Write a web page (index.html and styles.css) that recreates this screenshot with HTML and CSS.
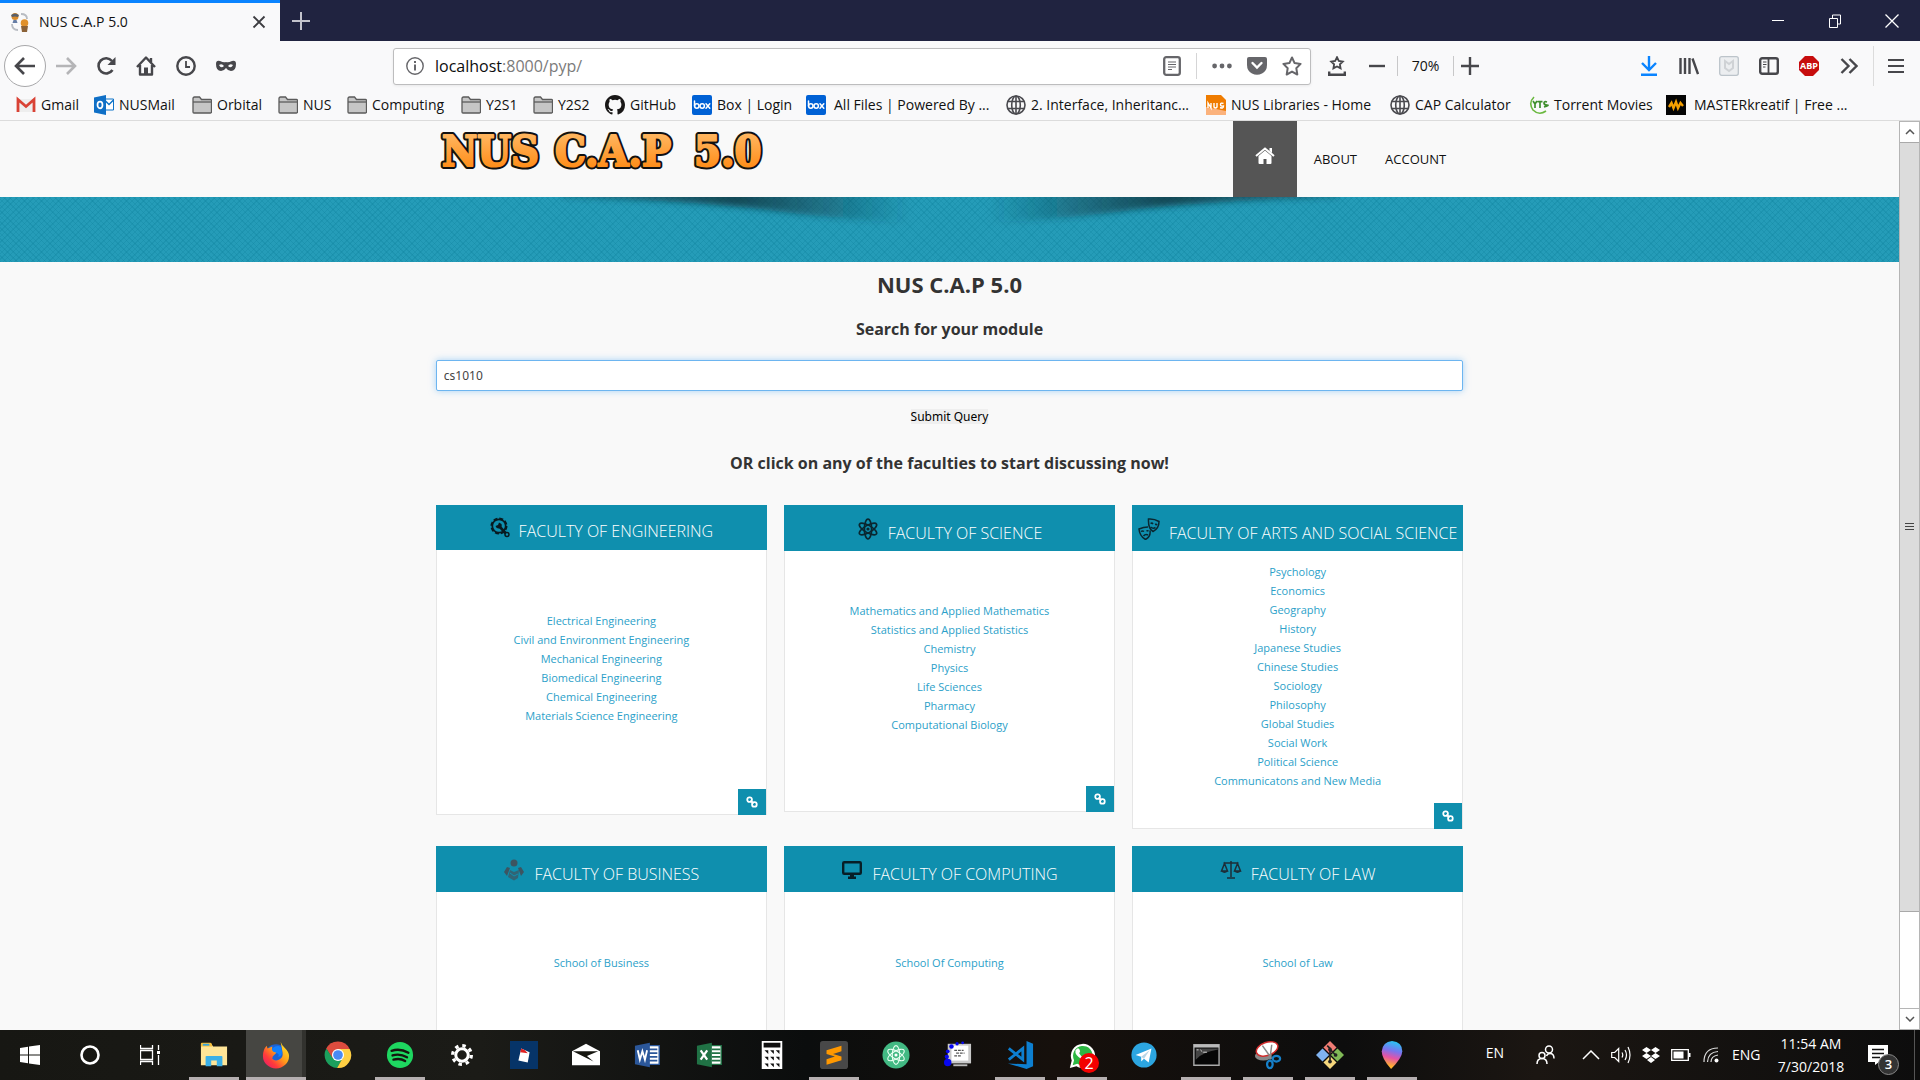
FILE: index.html
```html
<!DOCTYPE html>
<html lang="en">
<head>
<meta charset="utf-8">
<title>NUS C.A.P 5.0</title>
<link rel="stylesheet" href="styles.css">
</head>
<body>
<svg class="defs" aria-hidden="true">
  <defs>
    <symbol id="folder" viewBox="0 0 20 20"><path d="M1 3.500q0-1.500 1.500-1.500h5l2 2.500h9q1 0 1 1v11.500q0 1-1 1h-16.500q-1 0-1-1z" fill="#c6c6c6" stroke="#5b5b5b" stroke-width="1.300"/><path d="M1 7h18" stroke="#5b5b5b" stroke-width="1.300"/></symbol>
    <symbol id="globe" viewBox="0 0 20 20"><g fill="none" stroke="#4a4a4f" stroke-width="1.600"><circle cx="10" cy="10" r="9"/><ellipse cx="10" cy="10" rx="4.300" ry="9"/><path d="M10 1v18M2 6.500h16M2 13.500h16"/></g></symbol>
    <symbol id="chain" viewBox="0 0 12 12"><g fill="none" stroke="#fff" stroke-width="1.800"><rect x="1.300" y="1.300" width="4.600" height="4.600" rx="2"/><rect x="6.100" y="6.100" width="4.600" height="4.600" rx="2"/><path d="M4.500 4.500l3 3"/></g></symbol>
    <symbol id="box" viewBox="0 0 20 20"><rect width="20" height="20" rx="2" fill="#0061d5"/><g fill="none" stroke="#fff" stroke-width="1.500" stroke-linecap="round"><path d="M2.500 6v5"/><circle cx="4.800" cy="11" r="2.200"/><circle cx="10.200" cy="11" r="2.200"/><path d="M14 8.800l3.800 4.400M17.800 8.800L14 13.200"/></g></symbol>
  </defs>
</svg>

<header class="browser">
  <div class="tabs">
    <div class="tab">
      <svg width="20" height="20" viewBox="0 0 20 20"><path d="M11 2q6 0 6 5M2 12q0 6 6 6" fill="none" stroke="#b8bcc2" stroke-width="1.800"/><circle cx="5" cy="4.500" r="3.500" fill="#d98b2b"/><path d="M1 3q4-3 8 0l-1 2q-3-1-6 0z" fill="#59606b"/><path d="M3.500 8h3l1 3H2.500z" fill="#667da5"/><circle cx="14.500" cy="11" r="3.800" fill="#e0912c"/><path d="M11 14h7l-1 6h-5z" fill="#8b6238"/></svg>
      <span class="tab-title">NUS C.A.P 5.0</span>
      <button class="plain" aria-label="Close tab"><svg width="14" height="14" viewBox="0 0 14 14"><path d="M1.500 1.500l11 11M12.500 1.500l-11 11" stroke="#3c3c40" stroke-width="1.800"/></svg></button>
    </div>
    <button class="plain newtab" aria-label="New tab"><svg width="18" height="18" viewBox="0 0 18 18"><path d="M9 0v18M0 9h18" stroke="#c3c3cc" stroke-width="2"/></svg></button>
    <div class="winbtns">
      <button class="plain" aria-label="Minimize"><svg width="12" height="12" viewBox="0 0 12 12"><path d="M0 5.500h12" stroke="#fff"/></svg></button>
      <button class="plain" aria-label="Restore"><svg width="12" height="14" viewBox="0 0 12 14"><path d="M.5 4.500h8v9h-8zM3.500 4.500v-3.500h8v9h-3" fill="none" stroke="#fff"/></svg></button>
      <button class="plain" aria-label="Close window"><svg width="14" height="14" viewBox="0 0 14 14"><path d="M.5.5l13 13M13.500.5l-13 13" stroke="#fff" stroke-width="1.300"/></svg></button>
    </div>
  </div>

  <div class="toolbar">
    <button class="plain back" aria-label="Back"><svg width="22" height="20" viewBox="0 0 22 20"><path d="M21 10H3M10 2L2 10l8 8" fill="none" stroke="#47474b" stroke-width="2.600"/></svg></button>
    <button class="plain tool" aria-label="Forward"><svg width="22" height="20" viewBox="0 0 22 20"><path d="M1 10h18M12 2l8 8-8 8" fill="none" stroke="#b5b5b7" stroke-width="2.600"/></svg></button>
    <button class="plain tool" aria-label="Reload"><svg width="20" height="20" viewBox="0 0 20 20"><path d="M16.500 14a7.600 7.600 0 1 1-.500-9" fill="none" stroke="#47474b" stroke-width="2.600"/><path d="M19.500 1v8h-8z" fill="#47474b"/></svg></button>
    <button class="plain tool" aria-label="Home"><svg width="20" height="20" viewBox="0 0 20 20"><path d="M1 11l9-9.500 9 9.500M4 9v9.500h12V9M15 6V2" fill="none" stroke="#47474b" stroke-width="2.400" stroke-linejoin="round"/><path d="M8 18.500v-7h4v7z" fill="#47474b"/></svg></button>
    <button class="plain tool" aria-label="History"><svg width="20" height="20" viewBox="0 0 20 20"><circle cx="10" cy="10" r="8.700" fill="none" stroke="#47474b" stroke-width="2.400"/><path d="M10 5v6h4" fill="none" stroke="#47474b" stroke-width="1.800"/></svg></button>
    <button class="plain tool" aria-label="Private window"><svg width="20" height="12" viewBox="0 0 20 12"><path fill="#47474b" fill-rule="evenodd" d="M0 4Q0 0 4 1q4 2 6 1 2 1 6-1 4-1 4 3 0 7-5 7-3 0-5-3-2 3-5 3-5 0-5-7zM3 5q3-2 5 1-3 3-5-1zM17 5q-3-2-5 1 3 3 5-1z"/></svg></button>
    <div class="urlbar">
      <svg width="18" height="18" viewBox="0 0 18 18"><circle cx="9" cy="9" r="8.200" fill="none" stroke="#66666a" stroke-width="1.400"/><path d="M9 7.500v6M9 4v2" stroke="#66666a" stroke-width="2"/></svg>
      <div class="url"><b>localhost</b>:8000/pyp/</div>
      <button class="plain" aria-label="Reader view"><svg width="18" height="20" viewBox="0 0 18 20"><rect x="1.200" y="1.200" width="15.600" height="17.600" rx="2" fill="none" stroke="#66666a" stroke-width="2.300"/><path d="M5 6h8M5 8.500h8M5 11h8M5 13.500h4" stroke="#66666a" stroke-width="1.200"/></svg></button>
      <i class="usep"></i>
      <button class="plain" aria-label="Page actions"><svg width="20" height="6" viewBox="0 0 20 6"><g fill="#66666a"><circle cx="2.600" cy="3" r="2.400"/><circle cx="10" cy="3" r="2.400"/><circle cx="17.400" cy="3" r="2.400"/></g></svg></button>
      <button class="plain" aria-label="Pocket"><svg width="20" height="18" viewBox="0 0 20 18"><path d="M2 0h16q2 0 2 2v6q0 6-5 8.500-5 2.500-10 0Q0 14 0 8V2q0-2 2-2z" fill="#66666a"/><path d="M5.500 6L10 10.500 14.500 6" fill="none" stroke="#fff" stroke-width="2.400" stroke-linecap="round"/></svg></button>
      <button class="plain" aria-label="Bookmark"><svg width="20" height="20" viewBox="0 0 20 20"><path d="M10 1.500l2.600 5.600 6 .8-4.300 4.300 1 6.300L10 15.600l-5.300 2.900 1-6.300L1.400 7.900l6-.8z" fill="none" stroke="#66666a" stroke-width="2" stroke-linejoin="round"/></svg></button>
    </div>
    <button class="plain tool" aria-label="Bookmarks menu"><svg width="18" height="20" viewBox="0 0 18 20"><path d="M9 1.200l1.800 3.700 4 .6-2.900 2.800.7 4L9 10.400l-3.600 1.900.7-4-2.900-2.800 4-.6z" fill="none" stroke="#47474b" stroke-width="1.800"/><path d="M1.200 15.500v3.200h15.600v-3.200" fill="none" stroke="#47474b" stroke-width="2.400"/></svg></button>
    <button class="plain tool" aria-label="Zoom out"><svg width="16" height="4" viewBox="0 0 16 4"><path d="M0 2h16" stroke="#47474b" stroke-width="2.400"/></svg></button>
    <button class="plain zoomlevel">70%</button>
    <button class="plain zoomin" aria-label="Zoom in"><svg width="18" height="18" viewBox="0 0 18 18"><path d="M9 0v18M0 9h18" stroke="#47474b" stroke-width="2.400"/></svg></button>
    <div class="tools">
      <button class="plain tool" aria-label="Downloads"><svg width="18" height="20" viewBox="0 0 18 20"><path d="M9 0v13M2 7l7 7 7-7M1 18.800h16" fill="none" stroke="#0a84ff" stroke-width="2.400"/></svg></button>
      <button class="plain tool" aria-label="Library"><svg width="20" height="18" viewBox="0 0 20 18"><path d="M1.500 1v16M6 1v16M10.500 1v16M13.500 1.500L19 17" stroke="#47474b" stroke-width="2.400"/></svg></button>
      <button class="plain tool" aria-label="Site advisor"><svg width="20" height="20" viewBox="0 0 20 20"><rect x=".7" y=".7" width="18.600" height="18.600" rx="2" fill="#eceef0" stroke="#bcc4ca" stroke-width="1.300"/><path d="M6 5l4 3 4-3v7l-4 3-4-3z" fill="none" stroke="#cfd2d5" stroke-width="2"/></svg></button>
      <button class="plain tool" aria-label="Sidebars"><svg width="20" height="18" viewBox="0 0 20 18"><rect x="1.200" y="1.200" width="17.600" height="15.600" rx="2" fill="none" stroke="#47474b" stroke-width="2.400"/><path d="M9.500 1v16" stroke="#47474b" stroke-width="1.800"/><path d="M4 5h3.500M4 7.500h3.500M4 10h2.500" stroke="#47474b"/></svg></button>
      <button class="plain tool abp" aria-label="Adblock Plus"><span>ABP</span></button>
      <button class="plain tool" aria-label="More tools"><svg width="18" height="16" viewBox="0 0 18 16"><path d="M1.500 1l7 7-7 7M9.500 1l7 7-7 7" fill="none" stroke="#47474b" stroke-width="2.400"/></svg></button>
    </div>
    <button class="plain menu" aria-label="Menu"><svg width="16" height="16" viewBox="0 0 16 16"><path d="M0 2h16M0 8h16M0 14h16" stroke="#47474b" stroke-width="2.200"/></svg></button>
  </div>

  <nav class="bookmarks" aria-label="Bookmarks">
    <a href="#"><svg viewBox="0 0 20 20"><path d="M2 4h16v13H2z" fill="#eee"/><path d="M2 17V4.500l8 7 8-7V17" fill="none" stroke="#d94235" stroke-width="2.800"/></svg>Gmail</a>
    <a href="#"><svg viewBox="0 0 20 20"><path d="M10 4h9.500v11H10z" fill="#fff" stroke="#0f74c8"/><path d="M11 5.500l4 4 5-5" fill="none" stroke="#0f74c8" stroke-width="1.500"/><path d="M0 2.500L12 0v20L0 17.500z" fill="#0f6fc6"/><ellipse cx="6" cy="10" rx="2.500" ry="3.300" fill="none" stroke="#fff" stroke-width="1.700"/></svg>NUSMail</a>
    <a href="#"><svg><use href="#folder"/></svg>Orbital</a>
    <a href="#"><svg><use href="#folder"/></svg>NUS</a>
    <a href="#"><svg><use href="#folder"/></svg>Computing</a>
    <a href="#"><svg><use href="#folder"/></svg>Y2S1</a>
    <a href="#"><svg><use href="#folder"/></svg>Y2S2</a>
    <a href="#"><svg viewBox="0 0 16 16"><path fill="#191717" d="M8 0C3.580 0 0 3.580 0 8c0 3.540 2.290 6.530 5.470 7.590.4.070.55-.17.55-.38 0-.19-.01-.82-.01-1.490-2.010.37-2.530-.49-2.690-.94-.09-.23-.48-.94-.82-1.130-.28-.15-.68-.52-.01-.53.63-.01 1.080.58 1.230.82.72 1.210 1.870.87 2.330.66.07-.52.28-.87.51-1.070-1.780-.2-3.640-.89-3.640-3.950 0-.87.31-1.590.82-2.150-.08-.2-.36-1.020.08-2.120 0 0 .67-.21 2.200.82a7.600 7.600 0 0 1 4 0c1.530-1.040 2.200-.82 2.200-.82.44 1.100.16 1.920.08 2.120.51.56.82 1.270.82 2.150 0 3.070-1.870 3.750-3.650 3.950.29.25.54.73.54 1.480 0 1.070-.01 1.930-.01 2.200 0 .21.15.46.55.38A8 8 0 0 0 16 8c0-4.420-3.580-8-8-8z"/></svg>GitHub</a>
    <a href="#"><svg><use href="#box"/></svg>Box | Login</a>
    <a href="#" class="wide"><svg><use href="#box"/></svg>All Files | Powered By ...</a>
    <a href="#"><svg><use href="#globe"/></svg>2. Interface, Inheritanc...</a>
    <a href="#"><svg viewBox="0 0 20 20"><path d="M0 0h15l5 5v15H0z" fill="#ef7c00"/><path d="M0 12l20 4v4H0z" fill="#fbb27c"/><path d="M2 13V8l3 5V8M8 8v4q1.500 2 3 0V8M17.500 8.500q-3-1-3 1t3 1.500q0 3-3.500 1.500" fill="none" stroke="#fff" stroke-width="1.400"/></svg>NUS Libraries - Home</a>
    <a href="#"><svg><use href="#globe"/></svg>CAP Calculator</a>
    <a href="#"><svg viewBox="0 0 20 20"><path d="M5 2Q-1 8 4 15q6 6 13 1" fill="none" stroke="#6ab83f" stroke-width="1.600"/><path d="M4 6l2 3 2-3M6 9v4M8.500 6.700h5M11 6.700V13M18 7q-3-1-3 1t3 2-3 2" fill="none" stroke="#3e8e2d" stroke-width="1.700"/></svg>Torrent Movies</a>
    <a href="#" class="wide"><svg viewBox="0 0 20 20"><path fill="#050505" d="M0 0h20v20H0z"/><path d="M3 12l2.500-4 2 5 2.500-6 2 6 2.500-5 2.500 3" fill="none" stroke="#f6a000" stroke-width="2.400"/></svg>MASTERkreatif | Free ...</a>
  </nav>
</header>

<div class="viewport">
  <div class="page">
    <div class="site-head">
      <div class="wrap head-row">
        <a href="#" class="logo" aria-label="NUS C.A.P 5.0">
          <svg width="340" height="52" viewBox="0 0 340 52">
            <defs><linearGradient id="gold" x1="0" y1="0" x2="0" y2="1"><stop offset=".2" stop-color="#ffb45c"/><stop offset=".85" stop-color="#ff8c17"/></linearGradient></defs>
            <g class="logo-line"><text x="6" y="41">NUS</text><text x="119" y="41">C.A.P</text><text x="258" y="41">5.0</text></g>
            <g class="logo-fill" fill="url(#gold)" stroke="url(#gold)"><text x="6" y="41">NUS</text><text x="119" y="41">C.A.P</text><text x="258" y="41">5.0</text></g>
          </svg>
        </a>
        <nav class="site-nav">
          <a href="#" class="home" aria-label="Home"><svg width="20" height="18" viewBox="0 0 20 18"><path d="M10 3.500l6.500 5.500v7q0 1-1 1H11.500v-5h-3v5h-4q-1 0-1-1V9z" fill="#fff"/><path d="M1 9l9-7.500L19 9" fill="none" stroke="#fff" stroke-width="2"/><path d="M14.500 1h2.500v5l-2.500-2z" fill="#fff"/></svg></a>
          <a href="#">ABOUT</a>
          <a href="#">ACCOUNT</a>
        </nav>
      </div>
    </div>
    <div class="banner">
      <svg width="780" height="34" viewBox="0 0 780 34">
        <defs>
          <linearGradient id="fade" gradientUnits="userSpaceOnUse" x1="0" y1="0" x2="350" y2="0"><stop offset="0" stop-color="#12343e" stop-opacity=".4"/><stop offset=".5" stop-color="#12343e" stop-opacity=".8"/><stop offset="1" stop-color="#12343e" stop-opacity="0"/></linearGradient>
          <filter id="soft" x="-10%" y="-60%" width="120%" height="220%"><feGaussianBlur stdDeviation="4 3"/></filter>
        </defs>
        <path id="lobe" d="M0-8V0Q130 4 200 12 270 22 350 26V-8z" fill="url(#fade)" filter="url(#soft)"/>
        <use href="#lobe" transform="matrix(-1 0 0 1 780 0)"/>
      </svg>
    </div>

    <main class="wrap">
      <h1>NUS C.A.P 5.0</h1>
      <form>
        <h2><label for="q">Search for your module</label></h2>
        <input id="q" type="text" value="cs1010">
        <button type="button" class="submit">Submit Query</button>
      </form>
      <h2 class="or">OR click on any of the faculties to start discussing now!</h2>

      <div class="cards">
        <section class="card mid">
          <h3 class="short"><svg width="20" height="21" viewBox="0 0 20 21"><circle cx="9" cy="9" r="7.500" fill="none" stroke="#081a20" stroke-width="2" stroke-dasharray="4 1.900"/><circle cx="9" cy="9" r="6.700" fill="none" stroke="#081a20" stroke-width="1.700"/><path d="M9 9l7 7.500" stroke="#081a20" stroke-width="2.600"/><path d="M9 5.500l-1 2.500-2.500 1q1 3 4 2.500 3-1.500 2-4.500z" fill="#081a20"/><circle cx="17" cy="17.500" r="2" fill="#0f8fae" stroke="#081a20" stroke-width="1.500"/></svg>FACULTY OF ENGINEERING</h3>
          <ul><li><a href="#">Electrical Engineering</a></li><li><a href="#">Civil and Environment Engineering</a></li><li><a href="#">Mechanical Engineering</a></li><li><a href="#">Biomedical Engineering</a></li><li><a href="#">Chemical Engineering</a></li><li><a href="#">Materials Science Engineering</a></li></ul>
          <a href="#" class="more" aria-label="Open"><svg width="12" height="12"><use href="#chain"/></svg></a>
        </section>
        <section class="card low">
          <h3><svg width="22" height="22" viewBox="0 0 22 22"><g fill="none" stroke="#0a2730" stroke-width="1.700"><ellipse cx="11" cy="11" rx="3.600" ry="9.800"/><ellipse cx="11" cy="11" rx="3.600" ry="9.800" transform="rotate(60 11 11)"/><ellipse cx="11" cy="11" rx="3.600" ry="9.800" transform="rotate(120 11 11)"/></g><circle cx="11" cy="11" r="1.600" fill="#0a2730"/></svg>FACULTY OF SCIENCE</h3>
          <ul><li><a href="#">Mathematics and Applied Mathematics</a></li><li><a href="#">Statistics and Applied Statistics</a></li><li><a href="#">Chemistry</a></li><li><a href="#">Physics</a></li><li><a href="#">Life Sciences</a></li><li><a href="#">Pharmacy</a></li><li><a href="#">Computational Biology</a></li></ul>
          <a href="#" class="more" aria-label="Open"><svg width="12" height="12"><use href="#chain"/></svg></a>
        </section>
        <section class="card full">
          <h3><svg width="22" height="22" viewBox="0 0 22 22"><g fill="none" stroke="#0a2730" stroke-width="1.500"><path d="M10.500 1q5.500-.5 10.500 2.500 0 7-6 10-5-3-4.500-12.500zM10 9q-4.500 0-9 2 .5 7 6.500 10.500 5.500-3 4.500-9"/><path d="M12.500 5.500q1.500-1 2.500.5M17 6.500q1.500-.5 2 .8M12.500 9q2.500 2 5 .5M3 13.500q1.500-1 3 0M8.500 13q1-.5 2 0M5.500 18q2-2.500 4.500-1"/></g></svg>FACULTY OF ARTS AND SOCIAL SCIENCE</h3>
          <ul><li><a href="#">Psychology</a></li><li><a href="#">Economics</a></li><li><a href="#">Geography</a></li><li><a href="#">History</a></li><li><a href="#">Japanese Studies</a></li><li><a href="#">Chinese Studies</a></li><li><a href="#">Sociology</a></li><li><a href="#">Philosophy</a></li><li><a href="#">Global Studies</a></li><li><a href="#">Social Work</a></li><li><a href="#">Political Science</a></li><li><a href="#">Communicatons and New Media</a></li></ul>
          <a href="#" class="more" aria-label="Open"><svg width="12" height="12"><use href="#chain"/></svg></a>
        </section>
        <section class="card mid">
          <h3><svg width="22" height="22" viewBox="0 0 22 22"><g fill="#3d5561"><circle cx="11" cy="4" r="3.500"/><path d="M4 8l3 1-3 8-3-4zM18 8l3 5-3 4-3-8z"/><path d="M7 11l4 2 5-2-1 8-4 2.500L5 18z" opacity=".75"/></g><path d="M7 14l4 3 4-2" stroke="#0f8fae" fill="none"/></svg>FACULTY OF BUSINESS</h3>
          <ul><li><a href="#">School of Business</a></li></ul>
          <a href="#" class="more" aria-label="Open"><svg width="12" height="12"><use href="#chain"/></svg></a>
        </section>
        <section class="card mid">
          <h3><svg width="22" height="22" viewBox="0 0 22 22"><rect x="2.200" y="3.200" width="17.600" height="11.600" rx="1" fill="none" stroke="#071e26" stroke-width="2.400"/><path d="M9 15h4v2.500h2V20H7v-2.500h2z" fill="#071e26"/></svg>FACULTY OF COMPUTING</h3>
          <ul><li><a href="#">School Of Computing</a></li></ul>
          <a href="#" class="more" aria-label="Open"><svg width="12" height="12"><use href="#chain"/></svg></a>
        </section>
        <section class="card mid">
          <h3><svg width="22" height="22" viewBox="0 0 22 22"><g fill="none" stroke="#1d2e38" stroke-width="1.500"><path d="M11 2v16M3.500 4h15M7 19h8M4.500 4.500L1.500 12h6zM17.500 4.500l-3 7.500h6z"/></g><path d="M1 12h7q-3.500 4-7 0zM14 12h7q-3.500 4-7 0z" fill="#1d2e38"/></svg>FACULTY OF LAW</h3>
          <ul><li><a href="#">School of Law</a></li></ul>
          <a href="#" class="more" aria-label="Open"><svg width="12" height="12"><use href="#chain"/></svg></a>
        </section>
      </div>
    </main>
  </div>
  <div class="scrollbar" aria-hidden="true">
    <div class="arrow"><svg width="10" height="6" viewBox="0 0 10 6"><path d="M1 5l4-4 4 4" fill="none" stroke="#555" stroke-width="1.500"/></svg></div>
    <div class="thumb"><svg width="9" height="8" viewBox="0 0 9 8"><path d="M0 .5h9M0 3.500h9M0 6.500h9" stroke="#444"/></svg></div>
    <div class="track"></div>
    <div class="arrow"><svg width="10" height="6" viewBox="0 0 10 6"><path d="M1 1l4 4 4-4" fill="none" stroke="#555" stroke-width="1.500"/></svg></div>
  </div>
</div>

<footer class="taskbar">
  <div class="system">
    <button class="plain" aria-label="Start"><svg width="20" height="20" viewBox="0 0 20 20"><path d="M0 3l8-1.200v7.700H0zM9 1.600L20 0v9.500H9zM0 10.500h8v7.700L0 17zM9 10.500h11V20L9 18.400z" fill="#fff"/></svg></button>
    <button class="plain" aria-label="Cortana"><svg width="20" height="20" viewBox="0 0 20 20"><circle cx="10" cy="10" r="8.500" fill="none" stroke="#fff" stroke-width="2.600"/></svg></button>
    <button class="plain" aria-label="Task view"><svg width="20" height="20" viewBox="0 0 20 20"><path d="M.5 0v3.500h12V0M.5 5.500h12v9H.5zM.5 20v-3.500h12V20M18.500 0v5M18.500 10v10" fill="none" stroke="#fff" stroke-width="1.300"/><path d="M17 6h3v3h-3z" fill="#fff"/></svg></button>
  </div>
  <div class="apps">
    <button class="plain run" aria-label="File Explorer"><svg viewBox="0 0 30 30"><path d="M1 3h11l2 3h15v20H1z" fill="#ffe597"/><path d="M1 3q0-1 1-1h9q2 0 2 4H1z" fill="#f5bf3c"/><path d="M3 3h7v2H3z" fill="#35a4dc"/><path d="M6 27V17q0-1 1-1h16q1 0 1 1v10h-6v-6h-6v6z" fill="#3bb0e8"/></svg></button>
    <button class="plain run active" aria-label="Firefox"><svg viewBox="0 0 30 30"><defs><linearGradient id="ff" x1="1" y1="0" x2="0" y2="1"><stop offset=".1" stop-color="#ffe226"/><stop offset=".45" stop-color="#ff9a1a"/><stop offset=".7" stop-color="#ff3b3b"/><stop offset="1" stop-color="#e01278"/></linearGradient></defs><circle cx="15" cy="15" r="11.500" fill="#1b62d6"/><path d="M20 1q1 3 4 6 5 5 5 9A14 13.500 0 0 1 1 16q0-7 4-11l1 3 5-2q-1 3 1 5l4 1-3 3q-2 1-2 4 3 3 7 1 5-2 4-8-1-6-2-11z" fill="url(#ff)"/><path d="M14 6q6-2 7 3 2 7-4 8 3-3-3-5-4-1-3-4z" fill="#1280ff"/></svg></button>
    <button class="plain" aria-label="Chrome"><svg viewBox="0 0 30 30"><path d="M15 15L2.500 8A14 14 0 0 1 27.500 8.500z" fill="#dc4c3e"/><path d="M15 15V1a14 14 0 0 0-12.500 7L9 19z" fill="#dc4c3e"/><path d="M2.500 8A14 14 0 0 0 14 29l6-10-5-4-6 3z" fill="#1b9f5d"/><path d="M14 29A14 14 0 0 0 27.500 8.500H15l5.500 9z" fill="#ffcf43"/><circle cx="15" cy="15" r="6.500" fill="#fff"/><circle cx="15" cy="15" r="5.200" fill="#4a8af4"/></svg></button>
    <button class="plain run" aria-label="Spotify"><svg viewBox="0 0 30 30"><circle cx="15" cy="15" r="14" fill="#1ed760"/><path d="M6 10.500q9-3 18 2M7 15.500q8-2.500 15.500 2M8 20q7-2 12.500 1.500" fill="none" stroke="#15150f" stroke-width="2.500" stroke-linecap="round"/></svg></button>
    <button class="plain" aria-label="Settings"><svg viewBox="0 0 30 30"><circle cx="15" cy="15" r="6.700" fill="none" stroke="#fff" stroke-width="3.200"/><circle cx="15" cy="15" r="10" fill="none" stroke="#fff" stroke-width="3.500" stroke-dasharray="3.700 4.154"/></svg></button>
    <button class="plain" aria-label="Solitaire"><svg viewBox="0 0 30 30"><path d="M0 0h30v30H0z" fill="#063468"/><path d="M12 8l9 4-2 11-10-2z" fill="#fff"/><path d="M12 8l-1 4 8 1-3-3z" fill="#e02020"/></svg></button>
    <button class="plain" aria-label="Mail"><svg viewBox="0 0 30 30"><path d="M0 11L15 3l15 8v15H0z" fill="#fff"/><path d="M1 11h27L16 16l7 6z" fill="#15150f"/></svg></button>
    <button class="plain" aria-label="Word"><svg viewBox="0 0 30 30"><path d="M15 5h12v20H15z" fill="#fff" stroke="#2b579a" stroke-width="1.500"/><path d="M16 9h9M16 13h9M16 17h9M16 21h9" stroke="#2b579a" stroke-width="1.800"/><path d="M1 5l16-3v26L1 25z" fill="#2b579a"/><path d="M4 10l2.300 10L9 11l2.700 9L14 10" fill="none" stroke="#fff" stroke-width="2"/></svg></button>
    <button class="plain" aria-label="Excel"><svg viewBox="0 0 30 30"><path d="M15 5h12v20H15z" fill="#fff" stroke="#207245" stroke-width="1.500"/><path d="M17 9h9M17 13h9M17 17h9M17 21h9" stroke="#207245" stroke-width="2"/><path d="M1 5l16-3v26L1 25z" fill="#207245"/><path d="M5 10l7 10M12 10L5 20" stroke="#fff" stroke-width="2.400"/></svg></button>
    <button class="plain" aria-label="Calculator"><svg viewBox="0 0 30 30"><path d="M4 0h22v30H4z" fill="#fff"/><path d="M6 2h18v5H6zM7 10h4v4zM13 10h4v4zM19 10h4v4zM7 17h4v4zM13 17h4v4zM19 17h4v4zM7 24h4v4zM13 24h4v4zM19 24h4v4z" fill="#111"/></svg></button>
    <button class="plain run" aria-label="Sublime Text"><svg viewBox="0 0 30 30"><rect width="30" height="30" rx="3" fill="#484848"/><path d="M7 10l16-5v6l-9 3 9 2.500v4L7 25.500v-6l9-3-9-2.500z" fill="#ff9800"/></svg></button>
    <button class="plain" aria-label="Atom"><svg viewBox="0 0 30 30"><circle cx="15" cy="15" r="14.500" fill="#42b983"/><g fill="none" stroke="#e9fff2" stroke-width="1.200"><ellipse cx="15" cy="15" rx="4" ry="10"/><ellipse cx="15" cy="15" rx="4" ry="10" transform="rotate(60 15 15)"/><ellipse cx="15" cy="15" rx="4" ry="10" transform="rotate(120 15 15)"/></g><circle cx="15" cy="15" r="1.700" fill="#fff"/></svg></button>
    <button class="plain" aria-label="Editor"><svg viewBox="0 0 30 30"><path d="M4 3h25v21H4z" fill="#c9c9c9"/><path d="M8 5h18v16H8z" fill="#fff"/><path d="M11 10h10M13 13h9M11 16h8" stroke="#555" stroke-width="1.200" stroke-dasharray="3 1"/><path d="M10 25h15v2H10z" fill="#bbb"/><g fill="#0707f0"><circle cx="4" cy="23" r="4"/><circle cx="3" cy="17" r="2.300"/><circle cx="4" cy="11" r="2"/><circle cx="8" cy="6" r="2.400"/><circle cx="14" cy="3" r="1.800"/><circle cx="20" cy="2" r="1.500"/></g></svg></button>
    <button class="plain run" aria-label="Visual Studio Code"><svg viewBox="0 0 30 30"><path d="M22 0l7 3v24l-7 3-20-6 20 1z" fill="#0d7fd0"/><path d="M3 8l15 12V8L3 20" fill="none" stroke="#0d7fd0" stroke-width="3"/></svg></button>
    <button class="plain run" aria-label="WhatsApp, 2 unread"><svg viewBox="0 0 30 30"><path d="M2 29l2-8A13 13 0 1 1 9 27z" fill="#fff"/><path d="M5 26l1.500-5.500A10.500 10.500 0 1 1 10 24.500z" fill="#2cb742"/><path d="M10 8q2-1 3 3l-1 2q1 3 5 4l1-2q4 1 3 3-2 4-7 1-7-4-6-9z" fill="#fff"/></svg><span class="count">2</span></button>
    <button class="plain" aria-label="Telegram"><svg viewBox="0 0 30 30"><circle cx="15" cy="15" r="13.500" fill="#2ca5e0"/><path d="M6 15l17-7-3 15-5-4-3 3v-5z" fill="#fff"/><path d="M12 17l9-7-6 9z" fill="#b8d5e6"/></svg></button>
    <button class="plain run" aria-label="Command Prompt"><svg viewBox="0 0 30 30"><path d="M2 4h27v22H2z" fill="#070707" stroke="#aaa" stroke-width="1.500"/><path d="M2 4h27v3H2z" fill="#bbb"/><path d="M4 20q6-8 24-11V8H4z" fill="#454545"/><path d="M5 9.500h2M9 9.500l2 2M12 12h4" stroke="#ddd"/></svg></button>
    <button class="plain run" aria-label="Snipping Tool"><svg viewBox="0 0 30 30"><ellipse cx="10" cy="16" rx="9" ry="5" fill="#888"/><ellipse cx="14" cy="8.500" rx="12" ry="7" fill="#fff" stroke="#d12c2c" stroke-width="1.600" transform="rotate(-20 14 8.500)"/><path d="M9 5l10 14M19 4l-2 16" stroke="#888" stroke-width="1.600"/><g fill="none" stroke="#1680ca" stroke-width="2.400"><ellipse cx="24" cy="19" rx="4" ry="3"/><ellipse cx="17" cy="25" rx="3" ry="4"/></g></svg></button>
    <button class="plain run" aria-label="Git Bash"><svg viewBox="0 0 30 30"><path d="M15 0l7 7-7 7-7-7z" fill="#f07c74"/><path d="M23 8l7 7-7 7-7-7z" fill="#80b957"/><path d="M15 16l7 7-7 7-7-7z" fill="#f6d77c"/><path d="M7 8l7 7-7 7-7-7z" fill="#80b3f0"/><path d="M12 5l3 3v15M15 9l6 6" fill="none" stroke="#222" stroke-width="1.800"/><circle cx="15" cy="9" r="2" fill="#222"/><circle cx="15" cy="22" r="2" fill="#222"/><circle cx="21" cy="15" r="2" fill="#222"/></svg></button>
    <button class="plain run" aria-label="Paint 3D"><svg viewBox="0 0 30 30"><defs><linearGradient id="p3" x1=".6" y1="0" x2=".4" y2="1"><stop offset="0" stop-color="#26c7f5"/><stop offset=".35" stop-color="#7a74ee"/><stop offset=".6" stop-color="#e553a5"/><stop offset=".9" stop-color="#ffb12e"/></linearGradient></defs><path d="M15 0q11 1 11 11 0 7-12 19-10-11-10-19Q5 1 15 0z" fill="url(#p3)"/></svg></button>
  </div>
  <div class="tray">
    <span class="lang">EN</span>
    <button class="plain people" aria-label="People"><svg width="20" height="20" viewBox="0 0 20 20"><g fill="none" stroke="#fff" stroke-width="1.500"><circle cx="13" cy="4.500" r="3.500"/><circle cx="6" cy="10.500" r="3"/><path d="M1 19q0-5.500 5-5.500T11 19M10.500 11q1-2.500 3.500-2.500 4 0 4 5"/></g></svg></button>
    <button class="plain" aria-label="Show hidden icons"><svg width="18" height="10" viewBox="0 0 18 10"><path d="M1 9l8-8 8 8" fill="none" stroke="#fff" stroke-width="1.500"/></svg></button>
    <button class="plain" aria-label="Volume"><svg width="20" height="18" viewBox="0 0 20 18"><path d="M.7 6.500h3l4-4v13l-4-4h-3zM11 6.500q1.500 2.500 0 5M14 4q3 5 0 10M17 1q4 8 0 16" fill="none" stroke="#fff" stroke-width="1.200"/></svg></button>
    <button class="plain" aria-label="Dropbox"><svg width="18" height="16" viewBox="0 0 18 16"><path d="M4.500 0L9 3 4.500 6 0 3zM13.500 0L18 3l-4.500 3L9 3zM4.500 6L9 9l-4.500 3L0 9zM13.500 6L18 9l-4.500 3L9 9zM9 10l4 3-4 3-4-3z" fill="#fff"/></svg></button>
    <button class="plain" aria-label="Battery"><svg width="20" height="12" viewBox="0 0 20 12"><path d="M.7.7h16.600v10.600H.7z" fill="none" stroke="#fff" stroke-width="1.300"/><path d="M2.500 2.500h10v7h-10zM18 4h1.500v4H18z" fill="#fff"/></svg></button>
    <button class="plain" aria-label="Network"><svg width="16" height="16" viewBox="0 0 16 16"><g fill="none" stroke="#ddd" stroke-width="1.200"><path d="M1 15Q1 1 15 1M4.500 15Q5 5 15 4.500M8 15q0-6 7-7"/></g><circle cx="13.500" cy="13.500" r="2" fill="#fff"/></svg></button>
    <span class="ime">ENG</span>
    <div class="clock">11:54 AM<br>7/30/2018</div>
    <button class="plain notes" aria-label="3 notifications"><svg width="20" height="20" viewBox="0 0 20 20"><path d="M0 0h20v17h-9l-4 3v-3H0z" fill="#fff"/><path d="M4 4.500h12M4 8.500h12M4 12.500h8" stroke="#111" stroke-width="1.300"/></svg><span class="bubble">3</span></button>
  </div>
</footer>
</body>
</html>
```
FILE: styles.css
```css
* { box-sizing: border-box; }

body {
  margin: 0;
  height: 100vh;
  display: flex;
  flex-direction: column;
  overflow: hidden;
  background: #f9f9fa;
  color: #111;
  font: 14px/20px "Open Sans", "Noto Sans", sans-serif;
}

a { color: inherit; text-decoration: none; }
svg { display: block; flex: none; }
.defs { position: absolute; width: 0; height: 0; }

.plain {
  display: flex;
  align-items: center;
  justify-content: center;
  padding: 0;
  border: 0;
  background: none;
  color: inherit;
  font: inherit;
}

/* Browser chrome */
.browser { flex: none; border-bottom: 1px solid #dcdcdc; }
.tabs { display: flex; height: 41px; background: #202340; }
.tab {
  display: flex;
  align-items: center;
  width: 280px;
  padding: 0 14px 0 10px;
  gap: 9px;
  border-top: 3px solid #0a84ff;
  background: #f9f9fa;
}
.tab-title { flex: 1; }
.newtab { width: 42px; }
.winbtns { display: flex; margin-left: auto; }
.winbtns button { width: 57px; }

.toolbar { display: flex; align-items: center; height: 50px; padding: 0 3px 0 4px; }
.back {
  width: 42px;
  height: 42px;
  border: 1px solid #a8a8aa;
  border-radius: 50%;
  background: #fff;
}
.tool { width: 40px; height: 40px; }
.urlbar {
  display: flex;
  align-items: center;
  flex: 1;
  height: 37px;
  margin: 0 6px 0 147px;
  padding: 0 8px 0 12px;
  gap: 15px;
  border: 1px solid #bdbdbe;
  border-radius: 3px;
  background: #fff;
  box-shadow: 0 1px 3px #0001;
}
.url { flex: 1; margin-left: -4px; color: #7b7b7b; font-size: 16px; }
.url b { color: #0c0c0d; font-weight: 400; }
.usep { width: 1px; height: 26px; background: #d5d5d6; }
.zoomlevel {
  width: 57px;
  height: 20px;
  border: solid #c8c8c9;
  border-width: 0 1px;
}
.zoomin { width: 32px; height: 40px; }
.tools { display: flex; margin-left: 143px; }
.abp span {
  width: 20px;
  height: 20px;
  background: #c70d0d;
  clip-path: polygon(30% 0, 70% 0, 100% 30%, 100% 70%, 70% 100%, 30% 100%, 0 70%, 0 30%);
  color: #fff;
  font-size: 9px;
  font-weight: 700;
}
.menu { width: 44px; height: 40px; margin-left: 4px; border-left: 1px solid #dcdcdc; }

.bookmarks {
  display: grid;
  grid-template-columns: 78px 98px 86px 69px 114px 72px 72px 87px 114px 200px 200px 184px 139px 137px 1fr;
  height: 29px;
  padding-left: 16px;
}
.bookmarks a { display: flex; align-items: center; gap: 5px; height: 28px; white-space: nowrap; }
.bookmarks .wide { gap: 8px; }
.bookmarks svg { width: 20px; height: 20px; }

/* Site */
.viewport { display: flex; flex: 1; min-height: 0; }
.page { flex: 1; overflow: hidden; background: #f9f9f9; }
.wrap { width: 54.1%; margin: 0 auto; }
.head-row { display: flex; justify-content: space-between; height: 76px; }
.logo { padding-top: 4px; }
.logo text { font: bold 43px "DejaVu Serif Condensed", "DejaVu Serif", serif; }
.logo-line { fill: #111; stroke: #111; stroke-width: 6px; stroke-linejoin: round; }
.logo-fill { stroke-width: 2px; stroke-linejoin: round; }
.site-nav { display: flex; padding-right: 3px; color: #111; font-size: 13px; }
.site-nav a { display: flex; align-items: center; padding: 0 14px; }
.site-nav .home { width: 64px; justify-content: center; padding: 0 0 6px; background: #555; }
.site-nav a:nth-child(2) { padding-left: 17px; }

.banner {
  display: flex;
  justify-content: center;
  height: 65px;
  background:
    repeating-linear-gradient(45deg, #0b7f9a44 0 1px, transparent 1px 4px),
    repeating-linear-gradient(-45deg, #0b7f9a44 0 1px, transparent 1px 4px),
    #259cb8;
}

main { text-align: center; }
h1, h2, h3 { margin: 0; color: #333; }
h1 { padding-top: 7px; font-size: 22px; line-height: 30px; }
h2 { font-size: 16px; line-height: 22px; }
form h2 { padding: 19px 0 20px; }
form input {
  display: block;
  width: 100%;
  height: 31px;
  padding: 0 7px;
  border: 1px solid #6db5f0;
  border-radius: 2px;
  outline: 0;
  background: #fff;
  box-shadow: 0 0 7px #7cbdf4aa;
  color: #444;
  font: 12px "Noto Sans", sans-serif;
}
.submit {
  margin: 18px 0 0;
  padding: 0;
  border: 0;
  background: #efefef;
  color: #000;
  font: 12px/15px "Noto Sans", sans-serif;
}
.or { padding: 26px 0 31px; }

.cards {
  display: grid;
  grid-template-columns: repeat(3, 1fr);
  align-items: start;
  gap: 17px;
}
.card { display: flex; flex-direction: column; border: 1px solid #e6e6e6; border-top: 0; background: #fff; }
.card h3 {
  display: flex;
  justify-content: center;
  align-items: flex-end;
  gap: 9px;
  height: 46px;
  margin: 0 -1px;
  padding-bottom: 7px;
  background: #0f8fae;
  color: #fff;
  font-size: 16px;
  font-weight: 300;
  line-height: 22px;
  white-space: nowrap;
}
.card h3.short { height: 45px; padding-bottom: 8px; }
.card h3 svg { margin-bottom: 4px; }
.card ul { margin: 0; padding: 61px 0 64px; list-style: none; }
.low ul { padding: 50px 0 52px; }
.full ul { padding: 11px 0 13px; }
.card li { color: #2c9fc9; font-size: 11px; line-height: 19px; }
.more {
  display: flex;
  align-items: center;
  justify-content: center;
  align-self: flex-end;
  width: 28px;
  height: 26px;
  margin-bottom: -1px;
  background: #0f8fae;
}

.scrollbar { display: flex; flex-direction: column; width: 21px; border: 1px solid #b5b5b5; background: #fff; }
.arrow { display: flex; align-items: center; justify-content: center; height: 20px; }
.thumb {
  display: flex;
  align-items: center;
  justify-content: center;
  flex: 8;
  border: solid #a9a9a9;
  border-width: 1px 0;
  background: #dcdcdc;
}
.track { flex: 1; border-bottom: 1px solid #b5b5b5; }

/* Taskbar */
.taskbar {
  display: flex;
  flex: none;
  height: 50px;
  background: linear-gradient(90deg, #171713, #1b1b17 25%, #0b0d0d 42%, #16100c 55%, #0d0d0d 70%, #1b1612 80%, #0d0d0d);
  color: #fff;
}
.system { display: flex; margin-right: 3px; }
.system button { width: 60px; }
.apps { display: flex; }
.apps button { position: relative; width: 62px; }
.apps svg { width: 28px; height: 30px; }
.run::after {
  content: "";
  position: absolute;
  bottom: 0;
  left: 6px;
  right: 6px;
  height: 3px;
  background: #b5afb0;
}
.active { background: linear-gradient(90deg, transparent 1px, #464642 1px 57px, #32322e 57px 61px, transparent 61px); }
.active::after { left: 1px; right: 1px; }
.count {
  position: absolute;
  right: 14px;
  bottom: 7px;
  width: 20px;
  height: 20px;
  border-radius: 50%;
  background: #f30000;
  font-size: 16px;
  line-height: 20px;
}
.tray { display: flex; align-items: center; margin-left: auto; padding-right: 5px; }
.tray button { width: 30px; height: 50px; }
.tray .lang { margin-bottom: 4px; }
.tray .people { width: 60px; margin: 0 0 0 12px; }
.ime { width: 45px; padding-left: 6px; }
.clock { width: 80px; line-height: 23px; text-align: center; }
.tray .notes { position: relative; width: 64px; border-right: 1px solid #555; }
.notes svg { margin-right: 10px; }
.bubble {
  position: absolute;
  right: 15px;
  bottom: 5px;
  width: 21px;
  height: 21px;
  border: 1px solid #888;
  border-radius: 50%;
  background: #333;
  font-size: 13px;
  font-weight: 600;
  line-height: 19px;
}
```
